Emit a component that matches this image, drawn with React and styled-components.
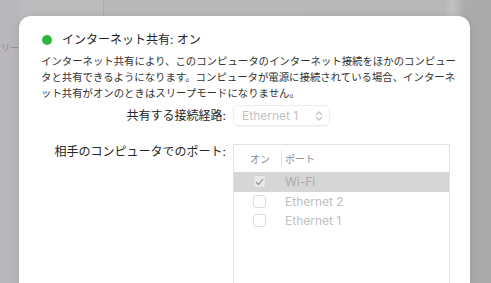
import React from 'react';
import styled, { createGlobalStyle } from 'styled-components';

const GlobalStyle = createGlobalStyle`
  html, body {
    margin: 0;
    padding: 0;
    overflow: hidden;
  }
  body {
    background: #b6b3b8;
    font-family: "Inter", "Noto Sans CJK JP", sans-serif;
    -webkit-font-smoothing: antialiased;
  }
`;

const Backdrop = styled.div`
  position: relative;
  display: flex;
  width: 491px;
  height: 283px;
  overflow: hidden;
`;

const EdgePane = styled.div`
  width: 19px;
  background: #bab7bc;
  overflow: hidden;
  padding-top: 41px;
  box-sizing: border-box;
`;

const EdgeText = styled.div`
  direction: rtl;
  white-space: nowrap;
  font-size: 9px;
  line-height: 14px;
  color: #8d8a8f;
`;

const SidePane = styled.div`
  width: 84px;
  background: #bdbabe;
  border-right: 1px solid #adaaae;
`;

const MainPane = styled.div`
  flex: 1;
  background: linear-gradient(90deg, #bbb8bc 0%, #b9b6ba 88%, #c4c1c5 90%, #aeabaf 93%, #aba8ac 100%);
`;

const Dialog = styled.div`
  position: absolute;
  left: 19px;
  top: 16px;
  width: 451px;
  height: 320px;
  background: #ffffff;
  border-radius: 12px;
  box-shadow: 0 2px 10px rgba(0, 0, 0, 0.12);
  padding: 16px 22px 0 22px;
  box-sizing: border-box;
  display: flex;
  flex-direction: column;
`;

const TitleRow = styled.div`
  display: flex;
  align-items: center;
  gap: 10px;
  height: 16px;
`;

const StatusDot = styled.span`
  width: 10px;
  height: 10px;
  margin-left: 1px;
  border-radius: 50%;
  background: ${p => p.color};
`;

const Title = styled.span`
  font-size: 12px;
  line-height: 16px;
  color: #262626;
`;

const Description = styled.p`
  margin: 6px 0 0 0;
  width: 415px;
  font-size: 10.4px;
  line-height: 16px;
  color: #333333;
  line-break: anywhere;
`;

const Form = styled.div`
  display: grid;
  grid-template-columns: 185px 1fr;
  column-gap: 7px;
  row-gap: 18px;
  margin-top: 3px;
`;

const Label = styled.div`
  justify-self: end;
  align-self: ${p => (p.top ? 'start' : 'center')};
  font-size: 12px;
  line-height: 16px;
  color: #262626;
`;

const PopupButton = styled.div`
  display: flex;
  align-items: center;
  justify-content: space-between;
  width: 97px;
  height: 21px;
  box-sizing: border-box;
  padding: 0 6px 0 8px;
  border: 1px solid #ececec;
  border-radius: 5px;
  box-shadow: 0 1px 1px rgba(0, 0, 0, 0.05);
  font-size: 12px;
  color: #c2c2c2;
`;

const Table = styled.div`
  width: 217px;
  height: 160px;
  box-sizing: border-box;
  border: 1px solid #e2e2e2;
  border-bottom: none;
`;

const HeaderRow = styled.div`
  display: flex;
  align-items: center;
  height: 27px;
  font-size: 10px;
  color: #8c8c8c;
`;

const HeaderOn = styled.span`
  width: 47px;
  padding-left: 16px;
  box-sizing: border-box;
`;

const HeaderDivider = styled.span`
  width: 1px;
  height: 16px;
  background: #e0e0e0;
  margin-right: 3px;
`;

const Row = styled.div`
  display: flex;
  align-items: center;
  height: 19.5px;
  background: ${p => (p.selected ? '#d7d6d7' : 'transparent')};
  font-size: 12px;
  color: ${p => (p.selected ? '#a9a9a9' : '#c0c0c0')};
`;

const CheckCell = styled.span`
  width: 51px;
  padding-left: 19px;
  box-sizing: border-box;
  display: flex;
`;

const Checkbox = styled.span`
  width: 13px;
  height: 13px;
  box-sizing: border-box;
  border: 1px solid ${p => (p.checked ? '#d2d2d2' : '#dcdcdc')};
  border-radius: 3px;
  background: ${p => (p.checked ? '#e9e9e9' : '#ffffff')};
  display: flex;
  align-items: center;
  justify-content: center;
`;

const Chevrons = () => (
  <svg width="8" height="12" viewBox="0 0 8 12" fill="none" stroke="#c4c4c4" strokeWidth="1.3" strokeLinecap="round" strokeLinejoin="round">
    <path d="M1.5 4.5 L4 2 L6.5 4.5" />
    <path d="M1.5 7.5 L4 10 L6.5 7.5" />
  </svg>
);

const CheckMark = () => (
  <svg width="9" height="8" viewBox="0 0 9 8" fill="none" stroke="#9a9a9a" strokeWidth="1.4" strokeLinecap="round" strokeLinejoin="round">
    <path d="M1.2 4.2 L3.5 6.4 L7.8 1.4" />
  </svg>
);

const ports = [
  { name: 'Wi-Fi', on: true },
  { name: 'Ethernet 2', on: false },
  { name: 'Ethernet 1', on: false },
];

export default function App() {
  return (
    <>
      <GlobalStyle />
      <Backdrop>
        <EdgePane>
          <EdgeText>カテゴリー —</EdgeText>
        </EdgePane>
        <SidePane />
        <MainPane />
        <Dialog>
          <TitleRow>
            <StatusDot color="#2db83d" />
            <Title>インターネット共有: オン</Title>
          </TitleRow>
          <Description>
            インターネット共有により、このコンピュータのインターネット接続をほかのコンピュータと共有できるようになります。コンピュータが電源に接続されている場合、インターネット共有がオンのときはスリープモードになりません。
          </Description>
          <Form>
            <Label>共有する接続経路:</Label>
            <PopupButton>
              <span>Ethernet 1</span>
              <Chevrons />
            </PopupButton>
            <Label top>相手のコンピュータでのポート:</Label>
            <Table>
              <HeaderRow>
                <HeaderOn>オン</HeaderOn>
                <HeaderDivider />
                <span>ポート</span>
              </HeaderRow>
              {ports.map(port => (
                <Row key={port.name} selected={port.on}>
                  <CheckCell>
                    <Checkbox checked={port.on}>{port.on && <CheckMark />}</Checkbox>
                  </CheckCell>
                  <span>{port.name}</span>
                </Row>
              ))}
            </Table>
          </Form>
        </Dialog>
      </Backdrop>
    </>
  );
}
